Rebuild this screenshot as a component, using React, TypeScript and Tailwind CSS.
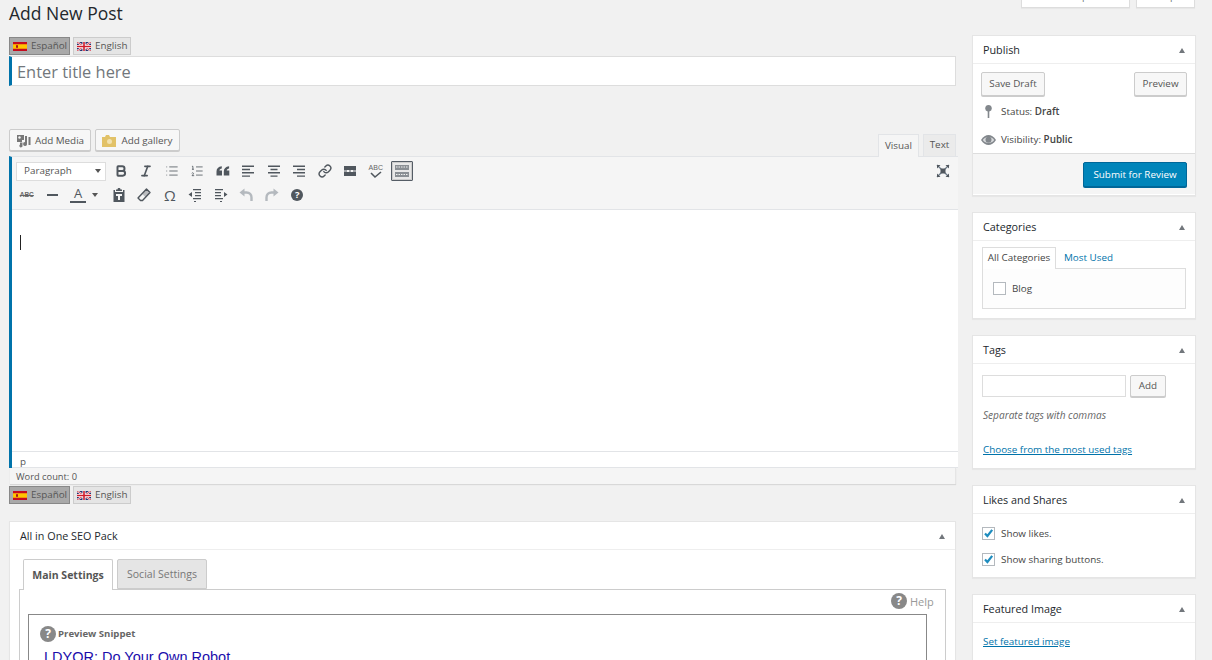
import { ReactNode } from "react";
import { Bold, Italic, Link, List, ListOrdered } from "lucide-react";

const ICON = "#50575e";

const SpainFlag = () => (
  <svg width="14" height="9" viewBox="0 0 14 9" className="shrink-0">
    <rect width="14" height="9" fill="#c60b1e" />
    <rect y="2.25" width="14" height="4.5" fill="#ffc400" />
    <rect x="3" y="3.2" width="2" height="2.6" fill="#ad1519" />
  </svg>
);

const UkFlag = () => (
  <svg width="14" height="9" viewBox="0 0 14 9" className="shrink-0">
    <rect width="14" height="9" fill="#28306e" />
    <path d="M0 0 14 9M14 0 0 9" stroke="#fff" strokeWidth="2" />
    <path d="M0 0 14 9M14 0 0 9" stroke="#cf1b2b" strokeWidth="0.8" />
    <path d="M7 0V9M0 4.5H14" stroke="#fff" strokeWidth="3" />
    <path d="M7 0V9M0 4.5H14" stroke="#cf1b2b" strokeWidth="1.6" />
  </svg>
);

const LangSwitch = () => (
  <div className="flex gap-[3px] h-[18px] text-[9.85px] leading-none text-[#555]">
    <div className="w-[61px] flex items-center gap-[4px] pl-[3px] bg-[#a9a9a9] border border-[#888]">
      <SpainFlag />
      <span>Español</span>
    </div>
    <div className="w-[58px] flex items-center gap-[4px] pl-[3px] bg-[#e5e5e5] border border-[#ccc]">
      <UkFlag />
      <span>English</span>
    </div>
  </div>
);

const Btn = ({ children, className }: { children: ReactNode; className: string }) => (
  <div
    className={`flex items-center justify-center bg-[#f7f7f7] border border-[#ccc] rounded-[2px] shadow-[0_1px_0_#ccc] text-[9.85px] leading-none text-[#555] ${className}`}
  >
    {children}
  </div>
);

const Triangle = () => (
  <div className="w-0 h-0 border-x-[3.5px] border-x-transparent border-b-[5px] border-b-[#72777c]" />
);

const Box = ({ title, children, className }: { title: string; children: ReactNode; className: string }) => (
  <div className={`bg-white border border-[#e5e5e5] shadow-[0_1px_1px_rgba(0,0,0,0.04)] ${className}`}>
    <div className="h-[28px] flex items-center justify-between pt-[1px] pl-[10px] pr-[10px] border-b border-[#eee] text-[10.8px] leading-none text-[#23282d]">
      <span>{title}</span>
      <Triangle />
    </div>
    {children}
  </div>
);

const Check = () => (
  <div className="w-[13px] h-[13px] border border-[#b4b9be] bg-white flex items-center justify-center shrink-0">
    <svg width="11" height="11" viewBox="0 0 11 11">
      <path d="M2 5.5 4.4 8 9.2 1.8" fill="none" stroke="#1e8cbe" strokeWidth="2.2" />
    </svg>
  </div>
);

const Cell = ({ children }: { children: ReactNode }) => (
  <div className="w-[25.5px] h-[22px] flex items-center justify-center shrink-0">{children}</div>
);

const Lines = ({ d }: { d: string }) => (
  <svg width="16" height="16" viewBox="0 0 16 16">
    <path d={d} fill={ICON} />
  </svg>
);

const Toolbar = () => (
  <div className="bg-[#f5f5f5] h-[53px] border-b border-[#e2e4e7] pt-[2px] relative">
    <div className="flex items-center h-[24px] pl-[4px]">
      <div className="w-[90px] h-[19px] bg-white border border-[#ddd] flex items-center justify-between pl-[7px] pr-[4px] text-[9.85px] leading-none text-[#555] mr-[2px]">
        <span>Paragraph</span>
        <div className="w-0 h-0 border-x-[3.5px] border-x-transparent border-t-[4px] border-t-[#555]" />
      </div>
      <Cell><Bold size={14} color={ICON} strokeWidth={3.4} /></Cell>
      <Cell><Italic size={14} color={ICON} strokeWidth={2.8} /></Cell>
      <Cell><List size={14} color={ICON} strokeWidth={1.4} /></Cell>
      <Cell><ListOrdered size={14} color={ICON} strokeWidth={1.4} /></Cell>
      <Cell>
        <Lines d="M1.500 12.500V8.500C1.500 5.500 3.300 3.800 6.800 3.300V5.600C5.300 5.900 4.500 6.500 4.400 7.500H7V12.500ZM8.800 12.500V8.500C8.800 5.500 10.600 3.800 14.100 3.300V5.600C12.600 5.900 11.800 6.500 11.700 7.500H14.300V12.500Z" />
      </Cell>
      <Cell>
        <Lines d="M2 2.500H14V3.900H2ZM2 5.800H10V7.200H2ZM2 9.100H14V10.500H2ZM2 12.400H10V13.800H2Z" />
      </Cell>
      <Cell>
        <Lines d="M2 2.500H14V3.900H2ZM4.500 5.800H11.500V7.200H4.500ZM2 9.100H14V10.500H2ZM4.500 12.400H11.500V13.800H4.500Z" />
      </Cell>
      <Cell>
        <Lines d="M2 2.500H14V3.900H2ZM6 5.800H14V7.200H6ZM2 9.100H14V10.500H2ZM6 12.400H14V13.800H6Z" />
      </Cell>
      <Cell><Link size={14} color={ICON} strokeWidth={2.4} /></Cell>
      <Cell>
        <Lines d="M2 3H14V7H2ZM2 9H14V13H2ZM2 7.400H5V8.600H2ZM7 7.400H9V8.600H7ZM11 7.400H14V8.600H11Z" />
      </Cell>
      <Cell>
        <div className="flex flex-col items-center">
          <span className="text-[7px] leading-[7px] text-[#666] font-['Liberation_Sans',sans-serif]">ABC</span>
          <svg width="14" height="8" viewBox="0 0 14 8">
            <path d="M2 2 6 6 12 1" fill="none" stroke={ICON} strokeWidth="1.6" />
          </svg>
        </div>
      </Cell>
      <div className="w-[22px] h-[20px] ml-[2px] border border-[#555d66] rounded-[1px] bg-[#e8e8e8] flex items-center justify-center shrink-0 shadow-[inset_0_0_0_1px_#ccc]">
        <svg width="16" height="14" viewBox="0 0 16 14">
          <path d="M1 1H15V6H1ZM1 8H15V13H1Z" fill="#8a8f94" />
          <path d="M2 3H14M2 10.500H14" stroke="#f0f0f0" strokeWidth="1" strokeDasharray="1.500 1" />
        </svg>
      </div>
    </div>
    <div className="flex items-center h-[24px] pl-[2px]">
      <Cell><span className="text-[6.500px] leading-none font-bold text-[#666] line-through font-['Liberation_Sans',sans-serif]">ABC</span></Cell>
      <Cell><div className="w-[11px] h-[2px] bg-[#50575e]" /></Cell>
      <div className="w-[41px] h-[22px] flex items-center shrink-0 pl-[5px]">
        <div className="w-[16px] flex flex-col items-center border-b-2 border-[#50575e] pb-[1px]">
          <span className="text-[13px] leading-[13px] text-[#50575e]">A</span>
        </div>
        <div className="ml-[6px] w-0 h-0 border-x-[3.5px] border-x-transparent border-t-[4px] border-t-[#555]" />
      </div>
      <Cell>
        <Lines d="M5 2.500H6.500C6.500 1.500 7 1 8 1S9.500 1.500 9.500 2.500H11V4H5ZM2.500 3H4V5H12V3H13.500V15H2.500ZM5 7V9H7V13H9V9H11V7Z" />
      </Cell>
      <Cell>
        <svg width="14" height="14" viewBox="0 0 14 14">
          <path d="M9.500 1 13 4.500 5.500 12.500H3.500L1 10Z" fill="none" stroke={ICON} strokeWidth="1.400" strokeLinejoin="round" />
          <path d="M9.500 1 13 4.500 8.500 9.300 5 5.800Z" fill={ICON} fillOpacity="0.35" />
        </svg>
      </Cell>
      <Cell><span className="text-[15px] leading-none text-[#50575e]">Ω</span></Cell>
      <Cell>
        <Lines d="M6 2H14V3.200H6ZM8 5H14V6.200H8ZM8 8H14V9.200H8ZM6 11H14V12.200H6ZM7 14H9V15H7ZM1.500 7.500 5 5V10Z" />
      </Cell>
      <Cell>
        <Lines d="M2 2H10V3.200H2ZM2 5H8V6.200H2ZM2 8H8V9.200H2ZM2 11H10V12.200H2ZM7 14H9V15H7ZM14.500 7.500 11 5V10Z" />
      </Cell>
      <Cell>
        <svg width="16" height="16" viewBox="0 0 16 16">
          <path d="M1.500 5.500 6.500 1.500V9.500Z" fill="#b4b9be" />
          <path d="M5 5.500H8.500C11.500 5.500 13.500 7.500 13.500 10.500V14" fill="none" stroke="#b4b9be" strokeWidth="2.400" />
        </svg>
      </Cell>
      <Cell>
        <svg width="16" height="16" viewBox="0 0 16 16">
          <path d="M14.500 5.500 9.500 1.500V9.500Z" fill="#b4b9be" />
          <path d="M11 5.500H7.500C4.500 5.500 2.500 7.500 2.500 10.500V14" fill="none" stroke="#b4b9be" strokeWidth="2.400" />
        </svg>
      </Cell>
      <Cell>
        <div className="w-[12px] h-[12px] rounded-full bg-[#50575e] text-white text-[9.5px] leading-[12px] font-bold text-center">?</div>
      </Cell>
    </div>
    <svg width="14" height="14" viewBox="0 0 14 14" className="absolute right-[8px] top-[7px]">
      <path d="M1 1 13 13M13 1 1 13" stroke="#6a7a88" strokeWidth="1.300" />
      <rect x="4.500" y="4.500" width="5" height="5" fill="#50575e" />
      <path d="M1 1H4.500L1 4.500ZM13 1H9.500L13 4.500ZM1 13H4.500L1 9.500ZM13 13H9.500L13 9.500Z" fill="#50575e" />
    </svg>
  </div>
);

const Editor = () => (
  <div>
    <div className="flex items-end justify-between h-[27px] w-[947px]">
      <div className="flex gap-[4px] self-start">
        <Btn className="w-[82px] h-[22px] gap-[4px] pt-[1px]">
          <svg width="15" height="14" viewBox="0 0 15 14">
            <path d="M1 1H8V6H6V8H1ZM9 2H11V9.500A2 2 0 1 1 9 8ZM12.500 3H14.500V11H12.500ZM4 8.500H6.500V11.500A1.600 1.600 0 1 1 4 10.500Z" fill="#777" />
            <circle cx="3.500" cy="3.500" r="1.200" fill="#f7f7f7" />
          </svg>
          <span>Add Media</span>
        </Btn>
        <Btn className="w-[85px] h-[22px] gap-[5px] pt-[1px]">
          <svg width="14" height="12" viewBox="0 0 14 12">
            <path d="M0 2H3L4 0H7L8 2H14V12H0Z" fill="#e2c268" />
            <circle cx="7.500" cy="6.500" r="2.500" fill="#f2e2b0" />
          </svg>
          <span>Add gallery</span>
        </Btn>
      </div>
      <div className="flex gap-[4px] text-[9.85px] leading-none">
        <div className="w-[41px] h-[23px] -mb-px relative bg-[#f5f5f5] border border-b-0 border-[#e2e4e7] flex items-center justify-center pb-[1px] text-[#555]">
          Visual
        </div>
        <div className="w-[33px] h-[22px] bg-[#ebebeb] border border-b-0 border-[#e2e4e7] flex items-center justify-center pb-[1px] text-[#555]">
          Text
        </div>
      </div>
    </div>
    <div className="w-[949px] border-l-[3px] border-[#0073aa] border-t border-t-[#e2e4e7]">
      <Toolbar />
      <div className="h-[241px] bg-white pt-[25px] pl-[8px]">
        <div className="w-px h-[15px] bg-[#222]" />
      </div>
      <div className="h-[17px] bg-white border-y border-[#e2e4e7] pl-[8px] text-[9.85px] leading-[18px] text-[#555]">p</div>
    </div>
    <div className="w-[946px] ml-px h-[16px] bg-[#f5f5f5] border-r border-[#e5e5e5] shadow-[0_1px_1px_rgba(0,0,0,0.1)] pl-[6px] text-[9.3px] leading-[17px] text-[#555]">
      Word count: 0
    </div>
  </div>
);

const CircleHelpBadge = () => (
  <div className="w-[16px] h-[16px] rounded-full bg-[#888] text-white text-[12px] leading-[16px] font-bold text-center shrink-0">?</div>
);

const SeoBox = () => (
  <Box title="All in One SEO Pack" className="mt-[17px] w-[947px] h-[200px]">
    <div className="pt-[9px] pl-[9px] pr-[10px] relative">
      <div className="flex gap-[4px] pl-[4px] relative z-10 text-[10.5px] leading-none h-[30px]">
        <div className="w-[90px] h-[31px] bg-white border border-b-0 border-[#ccc] rounded-t-[2px] flex items-center justify-center font-bold text-[#555]">
          Main Settings
        </div>
        <div className="w-[90px] h-[30px] bg-[#e5e5e5] border border-[#ccc] rounded-t-[2px] flex items-center justify-center text-[#777]">
          Social Settings
        </div>
      </div>
      <div className="w-[927px] h-[80px] border border-[#ccc] pt-[24px] pl-[8px]">
        <div className="w-[899px] h-[60px] border border-[#888] pt-[11px] pl-[11px]">
          <div className="flex items-center gap-[2px] text-[9.6px] leading-none font-bold text-[#666]">
            <CircleHelpBadge />
            <span>Preview Snippet</span>
          </div>
          <div className="mt-[7px] pl-[4px] text-[14.5px] leading-[16px] text-[#1a0dab] font-['Liberation_Sans',sans-serif]">
            LDYOR: Do Your Own Robot
          </div>
        </div>
      </div>
      <div className="absolute left-[881px] top-[43px] flex items-center gap-[3px] text-[11px] leading-none text-[#999]">
        <CircleHelpBadge />
        <span>Help</span>
      </div>
    </div>
  </Box>
);

const Sidebar = () => (
  <div className="w-[224px] shrink-0 -mt-[10px] text-[9.85px] leading-none text-[#444]">
    <div className="flex justify-end gap-[6px] mb-[27px] h-[18px] pr-px">
      <div className="w-[109px] bg-white border border-[#ddd] shadow-[0_1px_1px_rgba(0,0,0,0.04)] flex items-end justify-center text-[#72777c] pb-[5px]">Screen Options</div>
      <div className="w-[59px] bg-white border border-[#ddd] shadow-[0_1px_1px_rgba(0,0,0,0.04)] flex items-end justify-center text-[#72777c] pb-[5px]">Help</div>
    </div>

    <Box title="Publish" className="h-[161px]">
      <div className="flex justify-between pt-[8px] px-[8px]">
        <Btn className="w-[64px] h-[24px]">Save Draft</Btn>
        <Btn className="w-[53px] h-[24px]">Preview</Btn>
      </div>
      <div className="flex items-center h-[14px] mt-[9px] pl-[12px]">
        <svg width="7" height="13" viewBox="0 0 7 13" className="shrink-0 -mt-[1px]">
          <path d="M3.500 0A3.300 3.300 0 0 1 4.300 6.500V13H2.700V6.500A3.300 3.300 0 0 1 3.500 0Z" fill="#82878c" />
        </svg>
        <span className="ml-[9px]">Status: <b className="font-semibold">Draft</b></span>
      </div>
      <div className="flex items-center h-[14px] mt-[14px] pl-[8px]">
        <svg width="15" height="10" viewBox="0 0 15 10" className="shrink-0">
          <path d="M0 5C2 1.500 5 0 7.500 0S13 1.500 15 5C13 8.500 10 10 7.500 10S2 8.500 0 5Z" fill="#82878c" />
          <path d="M1.800 5C3.500 2.800 5 2 7.500 2 10 2 11.500 2.800 13.200 5 11.500 7.200 10 8 7.500 8 5 8 3.500 7.200 1.800 5Z" fill="#d8dadc" />
          <circle cx="7.500" cy="4.800" r="3" fill="#82878c" />
        </svg>
        <span className="ml-[5px]">Visibility: <b className="font-semibold">Public</b></span>
      </div>
      <div className="mt-[6px] h-[41px] bg-[#f5f5f5] border-t border-[#ddd] flex justify-end pt-[8px] pr-[8px]">
        <div className="w-[104px] h-[25px] bg-[#0085ba] border border-[#006799] rounded-[2px] shadow-[0_1px_0_#006799] text-white flex items-center justify-center">
          Submit for Review
        </div>
      </div>
    </Box>

    <Box title="Categories" className="mt-[16px] h-[107px]">
      <div className="pt-[6px] px-[9px]">
        <div className="flex items-center h-[22px]">
          <div className="w-[74px] h-[22px] relative z-10 bg-white border border-b-0 border-[#ddd] flex items-center justify-center pb-[1px]">All Categories</div>
          <span className="ml-[8px] text-[#0073aa]">Most Used</span>
        </div>
        <div className="w-[204px] h-[41px] -mt-px bg-[#fdfdfd] border border-[#ddd] flex items-center pl-[10px] gap-[6px]">
          <div className="w-[13px] h-[13px] border border-[#b4b9be] bg-white" />
          <span className="pt-[1px]">Blog</span>
        </div>
      </div>
    </Box>

    <Box title="Tags" className="mt-[16px] h-[134px]">
      <div className="flex gap-[4px] pt-[11px] pl-[9px]">
        <input className="w-[144px] h-[22px] bg-white border border-[#ddd]" />
        <Btn className="w-[36px] h-[22px]">Add</Btn>
      </div>
      <div className="mt-[13px] pl-[10px] text-[10.1px] italic text-[#666]">Separate tags with commas</div>
      <div className="mt-[25px] pl-[10px] text-[#0073aa] underline">Choose from the most used tags</div>
    </Box>

    <Box title="Likes and Shares" className="mt-[16px] h-[93px]">
      <div className="flex items-center gap-[6px] pl-[9px] mt-[13px]">
        <Check />
        <span>Show likes.</span>
      </div>
      <div className="flex items-center gap-[6px] pl-[9px] mt-[13px]">
        <Check />
        <span>Show sharing buttons.</span>
      </div>
    </Box>

    <Box title="Featured Image" className="mt-[16px] h-[80px]">
      <div className="mt-[14px] pl-[10px] text-[#0073aa] underline">Set featured image</div>
    </Box>
  </div>
);

export default function App() {
  return (
    <div className="w-[1212px] h-[660px] overflow-hidden bg-[#f1f1f1] font-['Open_Sans',sans-serif]">
      <div className="flex pl-[9px] gap-[16px]">
        <div className="w-[947px] shrink-0">
          <h1 className="h-[37px] pt-[3px] text-[17.5px] leading-[21px] text-[#23282d]">Add New Post</h1>
          <LangSwitch />
          <div className="mt-px h-[30px] bg-white border border-[#ddd] border-l-[3px] border-l-[#0073aa] mb-[43px] flex items-center pl-[5px] pt-[3px] text-[16.4px] leading-none text-[#72777c]">
            Enter title here
          </div>
          <Editor />
          <div className="mt-[2px]">
            <LangSwitch />
          </div>
          <SeoBox />
        </div>
        <Sidebar />
      </div>
    </div>
  );
}
